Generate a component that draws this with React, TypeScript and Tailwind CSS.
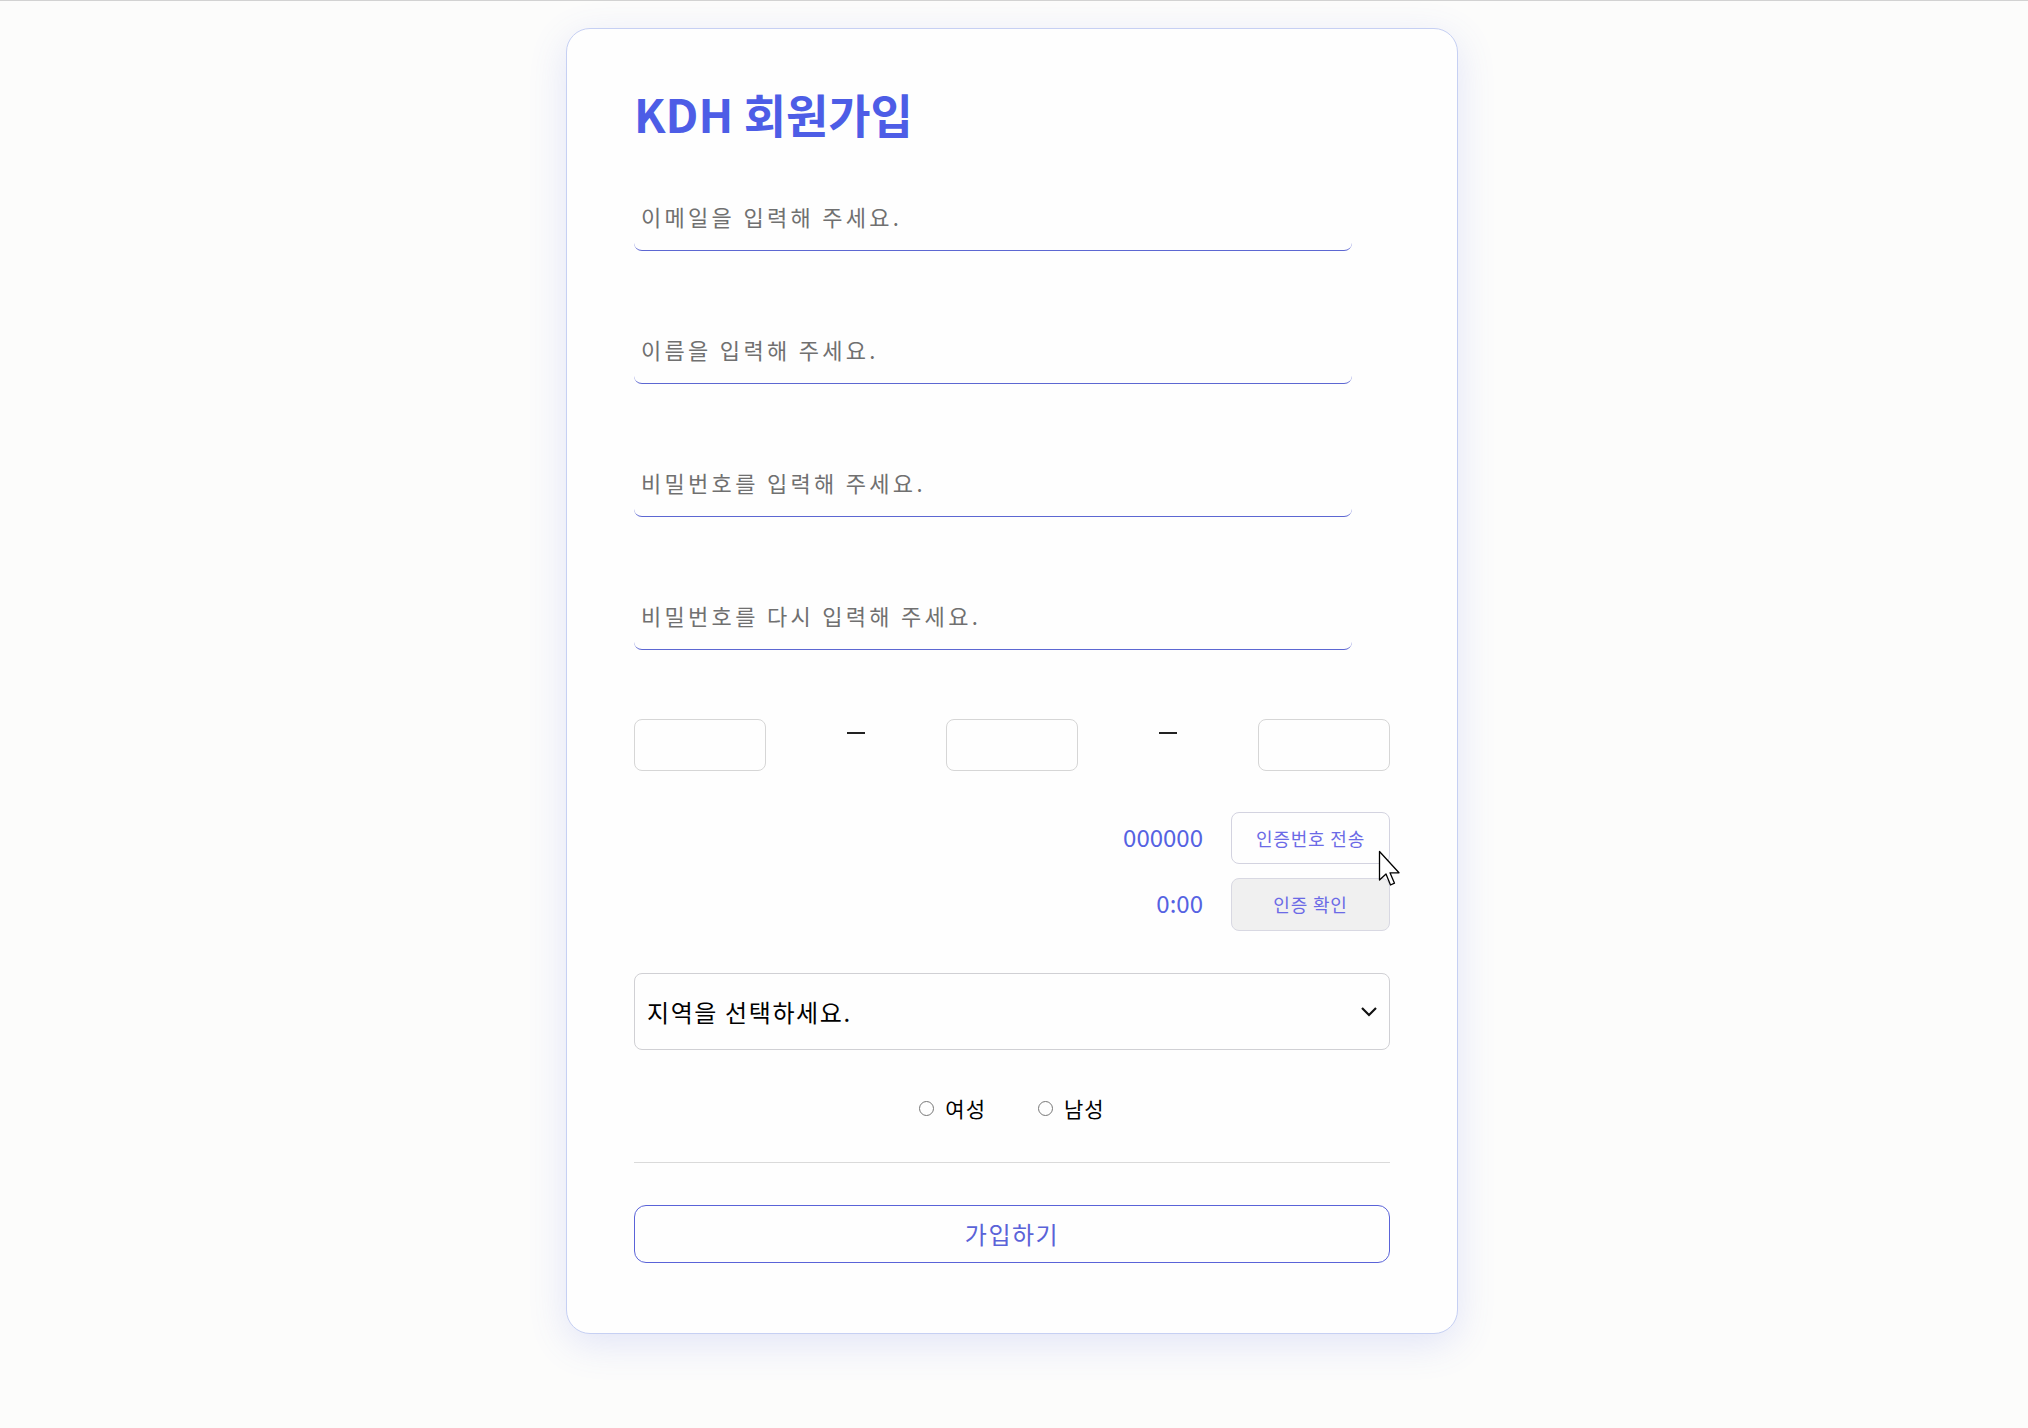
import React, { useState } from 'react'

const font = { fontFamily: '"Noto Sans CJK KR", "Noto Sans", sans-serif' }

const TextField = ({ placeholder, type }: { placeholder: string; type?: string }) => (
  <input
    type={type || 'text'}
    placeholder={placeholder}
    className="block h-[70px] w-[95%] rounded-lg border-b border-[#5d67d2] bg-transparent px-[7px] text-[22px] tracking-[3.3px] text-[#333] outline-none placeholder:text-[#707070]"
    style={font}
  />
)

const PhoneBox = () => (
  <input className="h-[52px] w-[132px] rounded-lg border border-[#d6d6d6] bg-transparent outline-none" />
)

const Cursor = () => (
  <svg
    className="pointer-events-none absolute left-[147px] top-[38px] z-10"
    width="23"
    height="38"
    viewBox="0 0 23 38"
  >
    <path
      d="M1.5 1.5 L1.5 30 L8 24 L12.5 35 L16.5 33.2 L12 22.8 L21 22.8 Z"
      fill="#fff"
      stroke="#000"
      strokeWidth="1.3"
      strokeLinejoin="round"
    />
  </svg>
)

export default function App() {
  const [gender, setGender] = useState('')

  return (
    <div className="min-h-screen border-t border-[#d2d2d2] bg-[#fcfcfb] pt-[27px] pb-[96px] pr-[4px]" style={font}>
      <div className="mx-auto w-[892px] rounded-[24px] border border-[#c6d0f3] bg-[#fefefe] px-[67px] pt-[61px] pb-[70px] shadow-[0_10px_38px_rgba(90,105,230,0.16)]">
        <h1 className="text-[46px] font-bold leading-none text-[#4d5de6]">KDH 회원가입</h1>

        <div className="mt-[45px] flex flex-col gap-[63px]">
          <TextField placeholder="이메일을 입력해 주세요." />
          <TextField placeholder="이름을 입력해 주세요." />
          <TextField placeholder="비밀번호를 입력해 주세요." type="password" />
          <TextField placeholder="비밀번호를 다시 입력해 주세요." type="password" />
        </div>

        <div className="mt-[69px] flex items-start justify-between">
          <PhoneBox />
          <div className="mt-[13px] h-[2px] w-[18px] bg-[#222]" />
          <PhoneBox />
          <div className="mt-[13px] h-[2px] w-[18px] bg-[#222]" />
          <PhoneBox />
        </div>

        <div className="mt-[41px] flex flex-col gap-[14px]">
          <div className="flex items-center justify-end gap-[28px]">
            <span className="-mt-[3px] text-[24px] text-[#5562e2]">000000</span>
            <div className="relative">
              <button className="h-[52px] w-[159px] rounded-lg border border-[#d3d3e0] bg-transparent text-[18px] tracking-[0.8px] text-[#6b6ae6]">
                인증번호 전송
              </button>
              <Cursor />
            </div>
          </div>
          <div className="flex items-center justify-end gap-[28px]">
            <span className="-mt-[3px] text-[24px] text-[#5562e2]">0:00</span>
            <button className="h-[53px] w-[159px] rounded-lg border border-[#d8d8e2] bg-[#f0f0f0] text-[18px] tracking-[0.8px] text-[#6b6ae6]">
              인증 확인
            </button>
          </div>
        </div>

        <div className="mt-[42px] flex h-[77px] items-center justify-between rounded-lg border border-[#d0d0d4] pl-[12px] pr-[11px]">
          <span className="text-[24px] tracking-[1.6px] text-black">지역을 선택하세요.</span>
          <svg width="18" height="12" viewBox="0 0 18 12">
            <polyline points="2,2 9,9 16,2" fill="none" stroke="#111" strokeWidth="2.2" />
          </svg>
        </div>

        <div className="mt-[43px] flex items-center justify-center gap-[52px] text-[21px] tracking-[1px] text-black">
          <label className="flex items-center gap-[11px]" onClick={() => setGender('f')}>
            <span className="h-[15px] w-[15px] rounded-full border-[1.5px] border-[#777]" />
            여성
          </label>
          <label className="flex items-center gap-[11px]" onClick={() => setGender('m')}>
            <span className="h-[15px] w-[15px] rounded-full border-[1.5px] border-[#777]" />
            남성
          </label>
        </div>

        <div className="mt-[37px] h-px bg-[#dadada]" />

        <button className="mt-[42px] h-[58px] w-full rounded-xl border border-[#5a63d8] text-[24px] tracking-[1.5px] text-[#5a63d8]">
          가입하기
        </button>
      </div>
    </div>
  )
}
